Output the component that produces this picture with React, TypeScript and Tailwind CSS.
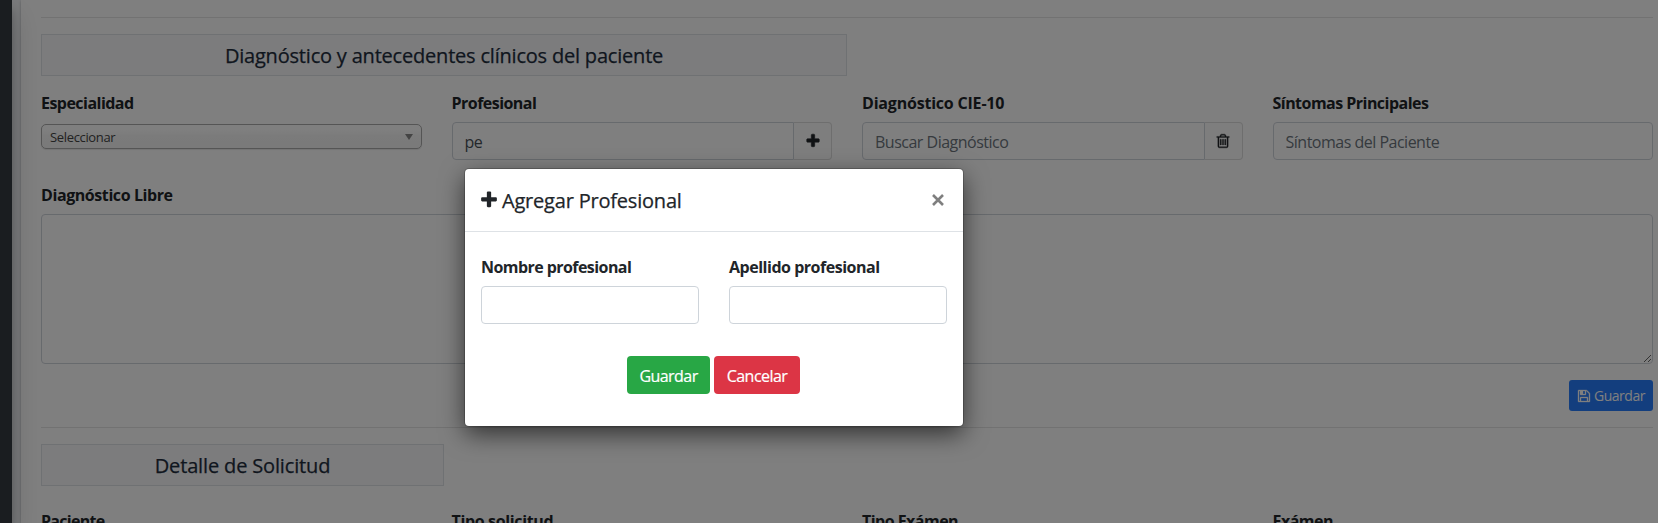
import React from "react";

const label = "block h-6 pt-px leading-6 text-[16px] font-bold tracking-[-0.53px] whitespace-nowrap";
const field = "h-[38px] border border-[#ced4da] bg-white px-3 pt-0.5 text-[16px] tracking-[-0.5px] placeholder-[#6c757d] text-[#495057] outline-none min-w-0";

const PLUS = "M1600 736v192q0 40-28 68t-68 28h-416v416q0 40-28 68t-68 28h-192q-40 0-68-28t-28-68v-416h-416q-40 0-68-28t-28-68v-192q0-40 28-68t68-28h416v-416q0-40 28-68t68-28h192q40 0 68 28t28 68v416h416q40 0 68 28t28 68z";
const TRASH = "M704 736v576q0 14-9 23t-23 9h-64q-14 0-23-9t-9-23v-576q0-14 9-23t23-9h64q14 0 23 9t9 23zm256 0v576q0 14-9 23t-23 9h-64q-14 0-23-9t-9-23v-576q0-14 9-23t23-9h64q14 0 23 9t9 23zm256 0v576q0 14-9 23t-23 9h-64q-14 0-23-9t-9-23v-576q0-14 9-23t23-9h64q14 0 23 9t9 23zm128 724v-948h-896v948q0 22 7 40.5t14.5 27 10.5 8.5h832q3 0 10.5-8.5t14.5-27 7-40.5zm-672-1076h448l-48-117q-7-9-17-11h-317q-10 2-17 11zm928 32v64q0 14-9 23t-23 9h-96v948q0 83-47 143.5t-113 60.5h-832q-66 0-113-58.5t-47-141.5v-952h-96q-14 0-23-9t-9-23v-64q0-14 9-23t23-9h309l70-167q15-37 54-63t79-26h320q40 0 79 26t54 63l70 167h309q14 0 23 9t9 23z";
const SAVE = "M512 1536h768v-384h-768v384zm896 0h128v-896q0-14-10-38.5t-20-34.5l-281-281q-10-10-34-20t-39-10v416q0 40-28 68t-68 28h-576q-40 0-68-28t-28-68v-416h-128v1280h128v-416q0-40 28-68t68-28h832q40 0 68 28t28 68v416zm-384-928v-320q0-13-9.5-22.5t-22.5-9.5h-192q-13 0-22.5 9.5t-9.5 22.5v320q0 13 9.5 22.5t22.5 9.5h192q13 0 22.5-9.5t9.5-22.5zm640 32v928q0 40-28 68t-68 28h-1344q-40 0-68-28t-28-68v-1344q0-40 28-68t68-28h928q40 0 88 20t76 48l280 280q28 28 48 76t20 88z";

function Icon({ d, size, weight = 0, className = "" }: { d: string; size: number; weight?: number; className?: string }) {
  return (
    <svg className={`shrink-0 ${className}`} width={size} height={size} viewBox="0 0 1792 1792" fill="currentColor" stroke="currentColor" strokeWidth={weight}>
      <path d={d} />
    </svg>
  );
}

function SectionTitle({ children, className }: { children: React.ReactNode; className: string }) {
  return (
    <h5 className={`flex h-[42px] items-center justify-center border border-[#dee2e6] bg-[#f8f9fa] pt-0.5 text-[20px] font-medium text-[#1f2d3d] [-webkit-text-stroke:0.25px] ${className}`}>
      {children}
    </h5>
  );
}

function Page() {
  return (
    <div className="isolate flex h-[523px] bg-[#f4f6f9]">
      <aside className="relative z-10 w-3 shrink-0 bg-[#343a40] shadow-[0_14px_28px_rgba(0,0,0,0.25),0_10px_10px_rgba(0,0,0,0.22)]" />
      <main className="ml-[9px] h-[523px] grow overflow-hidden bg-white pl-5 pr-[5px] shadow-[0_0_1px_rgba(0,0,0,0.125),0_1px_3px_rgba(0,0,0,0.2)]">
        <hr className="mt-[17px] border-black/10" />
        <SectionTitle className="mt-4 w-[806px] tracking-[-0.2px]">Diagnóstico y antecedentes clínicos del paciente</SectionTitle>
        <div className="mt-[14px] grid grid-cols-4 gap-x-[30px]">
          <div>
            <label className={label}>Especialidad</label>
            <div className="mt-[10px] flex h-[25px] items-center justify-between rounded-[5px] border border-[#aaa] bg-linear-to-b from-white from-20% via-[#f6f6f6] via-50% to-[#f4f4f4] px-2 text-[13px] tracking-[-0.34px] text-[#444] shadow-[0_1px_1px_rgba(0,0,0,0.1)]">
              <span className="pt-0.5">Seleccionar</span>
              <svg width="8" height="6" viewBox="0 0 8 6" fill="#888"><path d="M0 0H8L4 6Z" /></svg>
            </div>
          </div>
          <div>
            <label className={label}>Profesional</label>
            <div className="mt-2 flex">
              <input className={`${field} grow rounded-l`} defaultValue="pe" />
              <span className="flex w-[38px] items-center justify-center rounded-r border border-l-0 border-[#ddd] bg-[#fcfcfc]"><Icon d={PLUS} size={16} weight={60} /></span>
            </div>
          </div>
          <div>
            <label className={`${label} tracking-[-0.2px]!`}>Diagnóstico CIE-10</label>
            <div className="mt-2 flex">
              <input className={`${field} grow rounded-l`} placeholder="Buscar Diagnóstico" />
              <span className="flex w-[38px] items-center justify-center rounded-r border border-l-0 border-[#ddd] bg-[#fcfcfc]"><Icon d={TRASH} size={16} weight={40} /></span>
            </div>
          </div>
          <div>
            <label className={label}>Síntomas Principales</label>
            <input className={`${field} mt-2 block w-full rounded`} placeholder="Síntomas del Paciente" />
          </div>
        </div>
        <label className={`${label} mt-[22px] tracking-[-0.42px]!`}>Diagnóstico Libre</label>
        <textarea className="mt-2 block h-[150px] w-full resize-y rounded border border-[#ced4da] bg-white" />
        <div className="mt-4 flex justify-end">
          <button className="flex h-[31px] w-[84px] items-center justify-center gap-[3px] rounded-[3px] bg-[#277dfd] text-[14px] tracking-[-0.45px] text-white">
            <Icon d={SAVE} size={14} weight={40} /><span>Guardar</span>
          </button>
        </div>
        <hr className="mt-4 border-black/10" />
        <SectionTitle className="mt-4 w-[403px] tracking-[-0.15px]">Detalle de Solicitud</SectionTitle>
        <div className="mt-[22px] grid grid-cols-4 gap-x-[30px]">
          <label className={`${label} tracking-[-0.7px]!`}>Paciente</label>
          <label className={`${label} tracking-[-0.35px]!`}>Tipo solicitud</label>
          <label className={label}>Tipo Exámen</label>
          <label className={label}>Exámen</label>
        </div>
      </main>
    </div>
  );
}

function Modal() {
  return (
    <div className="absolute inset-0 flex items-start bg-black/50 pl-[465px] pt-[169px]">
      <div className="h-[257px] w-[498px] rounded-[4px] bg-white shadow-[0_0_0_1px_rgba(0,0,0,0.2),0_8px_24px_rgba(0,0,0,0.6)]">
        <div className="flex h-[63px] items-center justify-between border-b border-[#dee2e6] pl-[14px] pr-[19px]">
          <h5 className="flex items-center gap-[3px] text-[20px] font-medium tracking-[-0.2px] [-webkit-text-stroke:0.25px]">
            <Icon d={PLUS} size={20} /><span className="pt-0.5">Agregar Profesional</span>
          </h5>
          <svg width="12" height="12" viewBox="0 0 12 12" stroke="#7f7f7f" strokeWidth="2.6"><path d="M1 1L11 11M11 1L1 11" /></svg>
        </div>
        <div className="grid grid-cols-2 gap-x-[30px] px-4 pt-[22px]">
          <div>
            <label className={`${label} tracking-[-0.56px]!`}>Nombre profesional</label>
            <input className={`${field} mt-2 block w-full rounded`} />
          </div>
          <div>
            <label className={`${label} tracking-[-0.48px]!`}>Apellido profesional</label>
            <input className={`${field} mt-2 block w-full rounded`} />
          </div>
        </div>
        <div className="mt-8 flex gap-1 pl-[162px] text-[16px] tracking-[-0.55px] text-white [-webkit-text-stroke:0.2px]">
          <button className="h-[38px] w-[83px] rounded bg-[#28a745] pt-px">Guardar</button>
          <button className="h-[38px] w-[86px] rounded bg-[#dc3545] pt-px">Cancelar</button>
        </div>
      </div>
    </div>
  );
}

export default function App() {
  return (
    <div className="relative h-[523px] overflow-hidden font-['Open_Sans','Noto_Sans',sans-serif] text-[#212529]">
      <Page />
      <Modal />
    </div>
  );
}
